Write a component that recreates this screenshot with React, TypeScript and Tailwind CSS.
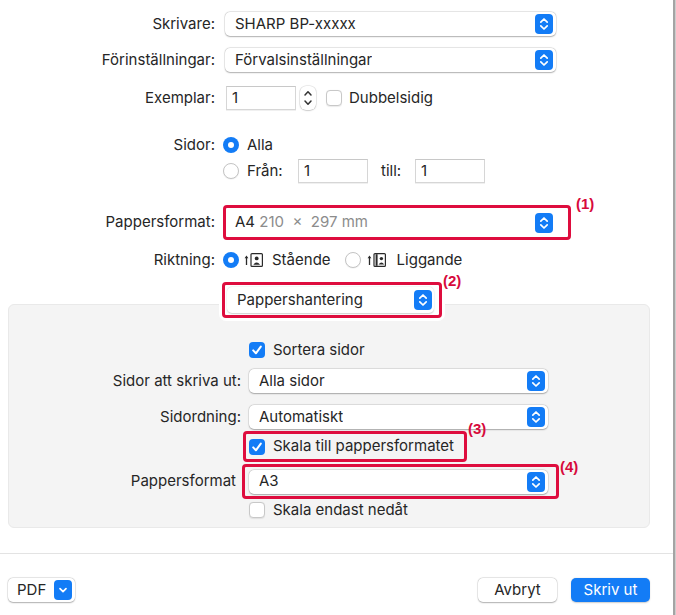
import React from "react";

const BLUE = "bg-[#137cf6]";

function UpDown() {
  return (
    <span className={`flex h-[20px] w-[18px] shrink-0 items-center justify-center rounded-[4px] ${BLUE}`}>
      <svg width="18" height="20" viewBox="0 0 18 20" fill="none">
        <path d="M5.8 8.2 L9 5 L12.2 8.2" stroke="white" strokeWidth="1.7" strokeLinecap="round" strokeLinejoin="round" />
        <path d="M5.8 11.8 L9 15 L12.2 11.8" stroke="white" strokeWidth="1.7" strokeLinecap="round" strokeLinejoin="round" />
      </svg>
    </span>
  );
}

function Select({ w, children }: { w: string; children: React.ReactNode }) {
  return (
    <div
      className={`flex h-[24px] ${w} items-center justify-between rounded-[5px] bg-white pl-[10px] pr-[3px] shadow-[0_0.5px_1.5px_rgba(0,0,0,0.28),0_0_0_0.5px_rgba(0,0,0,0.1)]`}
    >
      <span className="truncate">{children}</span>
      <UpDown />
    </div>
  );
}

function Input({ value, w = "w-[70px]" }: { value: string; w?: string }) {
  return (
    <div className={`flex h-[24px] ${w} items-center border border-[#d6d6d6] border-t-[#c8c8c8] bg-white pl-[5px] shadow-[0_0.5px_0.5px_rgba(0,0,0,0.06)]`}>
      {value}
    </div>
  );
}

function Radio({ on }: { on?: boolean }) {
  return on ? (
    <span className={`flex h-[16px] w-[16px] shrink-0 items-center justify-center rounded-full ${BLUE}`}>
      <span className="block h-[6px] w-[6px] rounded-full bg-white" />
    </span>
  ) : (
    <span className="block h-[16px] w-[16px] shrink-0 rounded-full border border-[#c4c4c4] bg-white shadow-[0_0.5px_1px_rgba(0,0,0,0.08)]" />
  );
}

function Check({ on }: { on?: boolean }) {
  return on ? (
    <span className={`flex h-[16px] w-[16px] shrink-0 items-center justify-center rounded-[4px] ${BLUE}`}>
      <svg width="12" height="12" viewBox="0 0 12 12" fill="none">
        <path d="M2.2 6.4 L4.9 9.3 L9.8 2.6" stroke="white" strokeWidth="2" strokeLinecap="round" strokeLinejoin="round" />
      </svg>
    </span>
  ) : (
    <span className="block h-[16px] w-[16px] shrink-0 rounded-[4px] border border-[#c8c8c8] bg-white shadow-[0_0.5px_1px_rgba(0,0,0,0.08)]" />
  );
}

function Orient({ landscape }: { landscape?: boolean }) {
  return (
    <svg width="20" height="16" viewBox="0 0 20 16" fill="none" className="block">
      <path d="M2.5 13 V5" stroke="#2a2a2a" strokeWidth="1.3" />
      <path d="M0.6 6.2 L2.5 3.4 L4.4 6.2 Z" fill="#2a2a2a" />
      <rect x="7" y="1.6" width="11.4" height="12.8" rx="1" stroke="#2a2a2a" strokeWidth="1.2" />
      {landscape ? (
        <>
          <path d="M9.6 2.2 V13.8" stroke="#2a2a2a" strokeWidth="2" />
          <circle cx="14.4" cy="6.6" r="1.7" fill="#2a2a2a" />
          <path d="M11.6 12.6 Q14.4 8.4 17.2 12.6 Z" fill="#2a2a2a" />
        </>
      ) : (
        <>
          <circle cx="12.7" cy="6.4" r="1.9" fill="#2a2a2a" />
          <path d="M9.3 12.8 Q12.7 8.2 16.1 12.8 Z" fill="#2a2a2a" />
        </>
      )}
    </svg>
  );
}

function Tag({ children }: { children: React.ReactNode }) {
  return (
    <span className="inline-block font-['Liberation_Sans',sans-serif] text-[15px] font-bold leading-none text-[#d70a3c]">
      {children}
    </span>
  );
}

const RED = "rounded-[4px] border-[3px] border-[#de0d3e]";

export default function App() {
  return (
    <div className="flex h-[615px] w-[676px] overflow-hidden bg-white font-['Inter',sans-serif] text-[15px] text-[#262626]">
      <div className="flex w-[673px] flex-col">
        {/* top section */}
        <div className="flex flex-col pt-[12px]">
          <div className="flex h-[24px] items-center">
            <span className="w-[215px] text-right">Skrivare:</span>
            <div className="ml-[10px]">
              <Select w="w-[331px]">SHARP BP-xxxxx</Select>
            </div>
          </div>
          <div className="mt-[12px] flex h-[24px] items-center">
            <span className="w-[215px] text-right">Förinställningar:</span>
            <div className="ml-[10px]">
              <Select w="w-[331px]">Förvalsinställningar</Select>
            </div>
          </div>
          <div className="mt-[14px] flex h-[24px] items-center">
            <span className="w-[215px] text-right">Exemplar:</span>
            <div className="ml-[11px]">
              <Input value="1" />
            </div>
            <div className="ml-[4px] flex h-[24px] w-[16px] flex-col items-center justify-center rounded-[6px] bg-white shadow-[0_0.5px_1.5px_rgba(0,0,0,0.25),0_0_0_0.5px_rgba(0,0,0,0.1)]">
              <svg width="12" height="22" viewBox="0 0 12 22" fill="none">
                <path d="M3 8 L6 4.8 L9 8" stroke="#333" strokeWidth="1.5" strokeLinecap="round" strokeLinejoin="round" />
                <path d="M3 14 L6 17.2 L9 14" stroke="#333" strokeWidth="1.5" strokeLinecap="round" strokeLinejoin="round" />
              </svg>
            </div>
            <div className="ml-[10px]">
              <Check />
            </div>
            <span className="ml-[7px]">Dubbelsidig</span>
          </div>
          <div className="mt-[27px] flex h-[16px] items-center">
            <span className="w-[215px] text-right">Sidor:</span>
            <div className="ml-[8px]">
              <Radio on />
            </div>
            <span className="ml-[8px]">Alla</span>
          </div>
          <div className="mt-[6px] flex h-[24px] items-center">
            <span className="w-[215px]" />
            <div className="ml-[8px]">
              <Radio />
            </div>
            <span className="ml-[8px] w-[51px]">Från:</span>
            <Input value="1" />
            <span className="ml-[13px] w-[34px]">till:</span>
            <Input value="1" />
          </div>
          <div className="mt-[22px] flex h-[35px] items-center">
            <span className="w-[215px] text-right">Pappersformat:</span>
            <div className={`ml-[8px] flex h-[35px] w-[348px] items-center ${RED}`}>
              <div className="flex h-[24px] w-[330px] items-center justify-between rounded-[5px] bg-white pl-[9px] pr-[3px]">
                <span>
                  A4 <span className="text-[#8c8c8c]">210 &nbsp;×&nbsp; 297 mm</span>
                </span>
                <UpDown />
              </div>
            </div>
            <div className="-mt-[12px] ml-[5px] self-start">
              <Tag>(1)</Tag>
            </div>
          </div>
          <div className="mt-[12px] flex h-[16px] items-center">
            <span className="w-[215px] text-right">Riktning:</span>
            <div className="ml-[8px]">
              <Radio on />
            </div>
            <span className="ml-[5px]">
              <Orient />
            </span>
            <span className="ml-[8px]">Stående</span>
            <div className="ml-[14px]">
              <Radio />
            </div>
            <span className="ml-[6px]">
              <Orient landscape />
            </span>
            <span className="ml-[10px]">Liggande</span>
          </div>
          <div className="relative z-10 mt-[14px] flex h-[36px]">
            <div className={`ml-[222px] flex h-[36px] w-[220px] items-center bg-white pl-[2px] shadow-[0_0_0_3px_white] ${RED}`}>
              <div className="flex h-[26px] w-[207px] items-center justify-between rounded-[5px] bg-white pl-[10px] pr-[2px] shadow-[0_0.5px_1.5px_rgba(0,0,0,0.2)]">
                <span>Pappershantering</span>
                <UpDown />
              </div>
            </div>
            <div className="-mt-[12px] ml-[1px]">
              <Tag>(2)</Tag>
            </div>
          </div>
        </div>

        {/* settings panel */}
        <div className="mx-[8px] -mt-[14px] flex h-[224px] w-[642px] flex-col rounded-[6px] border border-[#e9e9e9] bg-[#f4f4f4] pt-[37px]">
          <div className="flex h-[16px] items-center">
            <span className="w-[232px]" />
            <div className="ml-[8px]">
              <Check on />
            </div>
            <span className="ml-[8px]">Sortera sidor</span>
          </div>
          <div className="mt-[11px] flex h-[24px] items-center">
            <span className="w-[232px] text-right">Sidor att skriva ut:</span>
            <div className="ml-[8px]">
              <Select w="w-[299px]">Alla sidor</Select>
            </div>
          </div>
          <div className="mt-[12px] flex h-[24px] items-center">
            <span className="w-[232px] text-right">Sidordning:</span>
            <div className="ml-[8px]">
              <Select w="w-[299px]">Automatiskt</Select>
            </div>
          </div>
          <div className="mt-[2px] flex h-[31px] items-center">
            <span className="w-[232px]" />
            <div className={`ml-[2px] flex h-[31px] w-[224px] items-center pl-[3px] ${RED}`}>
              <Check on />
              <span className="ml-[8px] whitespace-nowrap">Skala till pappersformatet</span>
            </div>
            <div className="-mt-[34px] ml-[1px]">
              <Tag>(3)</Tag>
            </div>
          </div>
          <div className="mt-[2px] flex h-[35px] items-center">
            <span className="mr-[5px] w-[227px] text-right">Pappersformat</span>
            <div className={`ml-[1px] flex h-[35px] w-[317px] items-center pl-[4px] ${RED}`}>
              <div className="flex h-[24px] w-[299px] items-center justify-between rounded-[5px] bg-white pl-[10px] pr-[3px] shadow-[0_0.5px_1.5px_rgba(0,0,0,0.28),0_0_0_0.5px_rgba(0,0,0,0.1)]">
                <span>A3</span>
                <UpDown />
              </div>
            </div>
            <div className="-mt-[28px] ml-[1px]">
              <Tag>(4)</Tag>
            </div>
          </div>
          <div className="mt-[3px] flex h-[16px] items-center">
            <span className="w-[232px]" />
            <div className="ml-[8px]">
              <Check />
            </div>
            <span className="ml-[8px]">Skala endast nedåt</span>
          </div>
        </div>

        <div className="mt-[25px] h-px w-full bg-[#e3e3e3]" />

        {/* footer */}
        <div className="mt-[24px] flex h-[24px] items-center px-[8px]">
          <div className="flex h-[24px] w-[67px] items-center justify-between rounded-[5px] bg-white pl-[9px] pr-[3px] shadow-[0_0.5px_1.5px_rgba(0,0,0,0.28),0_0_0_0.5px_rgba(0,0,0,0.1)]">
            <span>PDF</span>
            <span className={`flex h-[20px] w-[18px] items-center justify-center rounded-[4px] ${BLUE}`}>
              <svg width="12" height="12" viewBox="0 0 12 12" fill="none">
                <path d="M3 4.6 L6 7.6 L9 4.6" stroke="white" strokeWidth="1.7" strokeLinecap="round" strokeLinejoin="round" />
              </svg>
            </span>
          </div>
          <div className="ml-auto flex h-[24px] w-[79px] items-center justify-center rounded-[5px] bg-white shadow-[0_0.5px_1.5px_rgba(0,0,0,0.28),0_0_0_0.5px_rgba(0,0,0,0.1)]">
            Avbryt
          </div>
          <div className={`ml-[14px] flex h-[24px] w-[79px] items-center justify-center rounded-[5px] ${BLUE} text-white shadow-[0_0.5px_1.5px_rgba(0,0,0,0.2)]`}>
            Skriv ut
          </div>
          <span className="w-[15px]" />
        </div>
      </div>
      <div className="flex h-full w-[3px]">
        <div className="w-[2px] bg-[#a4a4a4]" />
        <div className="w-[1px] bg-[#cdcdcd]" />
      </div>
    </div>
  );
}
